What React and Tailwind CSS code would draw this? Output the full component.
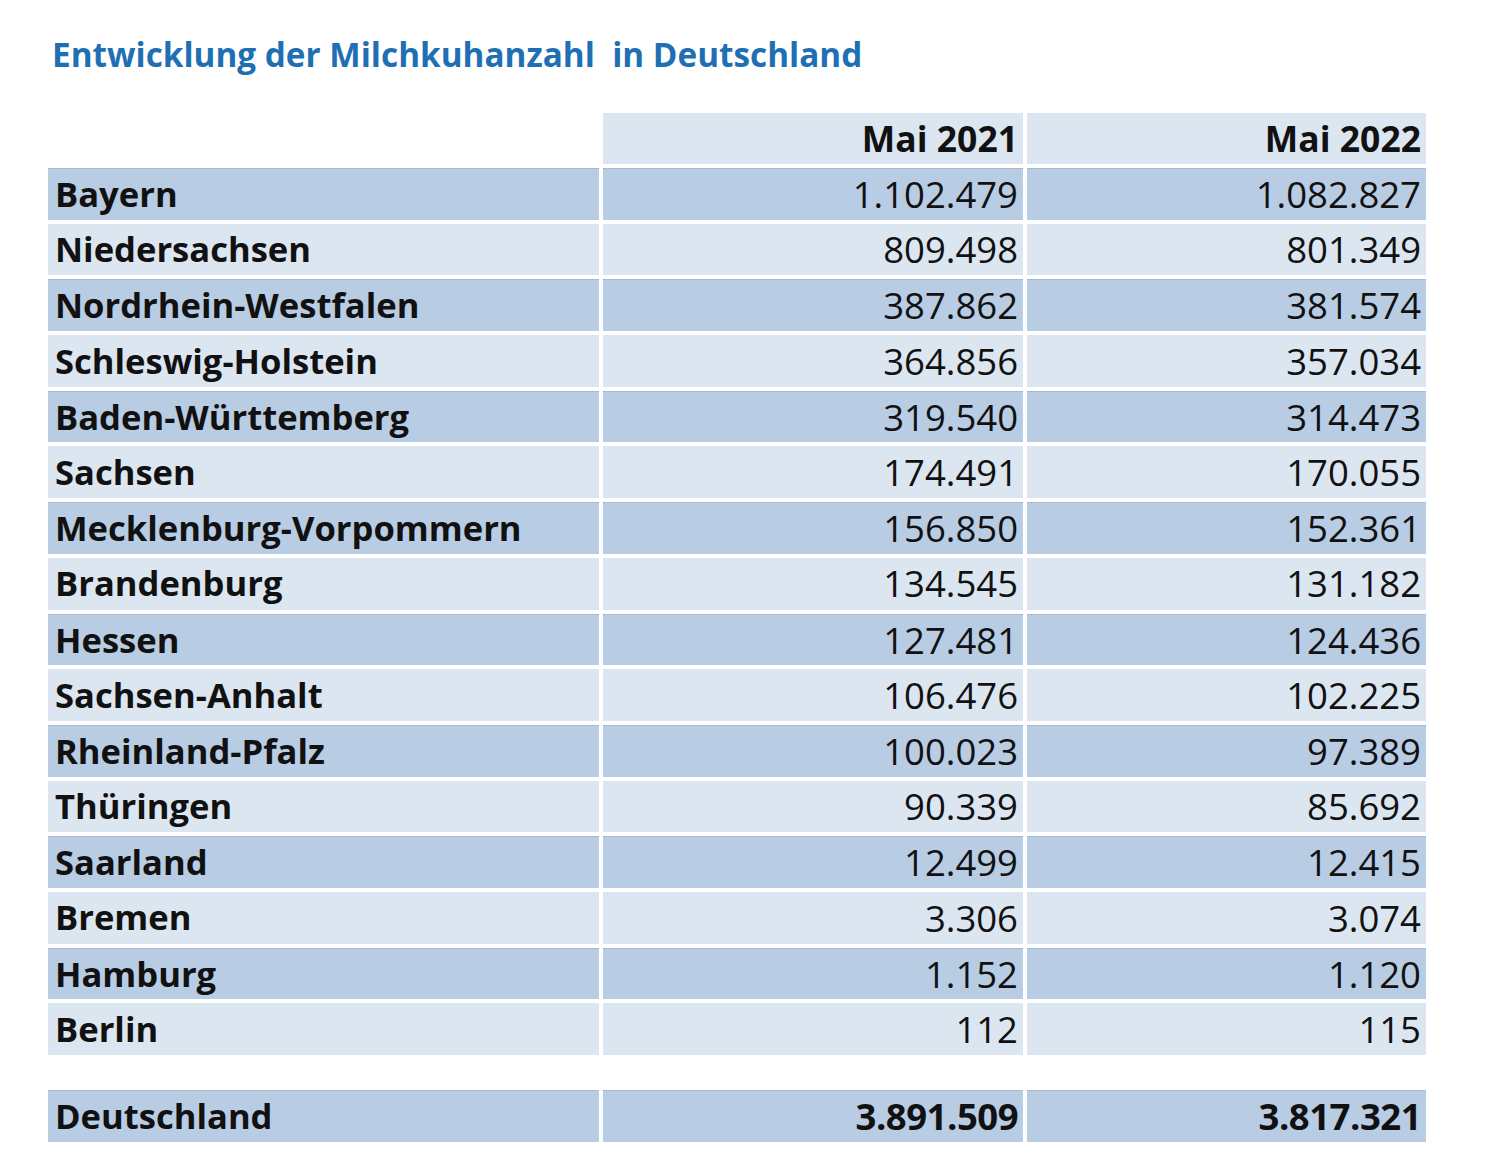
import React from 'react';

const ROWS = [
    ['Bayern', '1.102.479', '1.082.827'],
    ['Niedersachsen', '809.498', '801.349'],
    ['Nordrhein-Westfalen', '387.862', '381.574'],
    ['Schleswig-Holstein', '364.856', '357.034'],
    ['Baden-Württemberg', '319.540', '314.473'],
    ['Sachsen', '174.491', '170.055'],
    ['Mecklenburg-Vorpommern', '156.850', '152.361'],
    ['Brandenburg', '134.545', '131.182'],
    ['Hessen', '127.481', '124.436'],
    ['Sachsen-Anhalt', '106.476', '102.225'],
    ['Rheinland-Pfalz', '100.023', '97.389'],
    ['Thüringen', '90.339', '85.692'],
    ['Saarland', '12.499', '12.415'],
    ['Bremen', '3.306', '3.074'],
    ['Hamburg', '1.152', '1.120'],
    ['Berlin', '112', '115'],
];

const GRID = "grid grid-cols-[551px_420px_399px] gap-x-[4px]";

function Row({ cells, dark, bold }) {
    const bg = dark ? "bg-[#b8cce4] border-t border-dotted border-[#98a8bc]" : "bg-[#dce6f1]";
    return (
        <div className={`${GRID} h-[51.7px]`}>
            <div className={`${bg} flex items-center pl-[7px] font-bold text-[34.6px]`}>{cells[0]}</div>
            <div className={`${bg} flex items-center justify-end pr-[5px] text-[36.5px] ${bold ? 'font-bold tracking-[-0.5px]' : ''}`}>{cells[1]}</div>
            <div className={`${bg} flex items-center justify-end pr-[5px] text-[36.5px] ${bold ? 'font-bold tracking-[-0.5px]' : ''}`}>{cells[2]}</div>
        </div>
    );
}

export default function App() {
    return (
        <div className="w-[1500px] h-[1162px] bg-white pl-[48px] pt-[30px] text-[#111] leading-none" style={{ fontFamily: '"Open Sans", sans-serif' }}>
            <h1 className="pl-[4px] h-[50px] text-[#1f6fb4] font-bold text-[33.3px] flex items-center">
                Entwicklung der Milchkuhanzahl&nbsp; in Deutschland
            </h1>
            <div className="mt-[33px] flex flex-col gap-[4px]">
                <div className={`${GRID} h-[51px]`}>
                    <div className="bg-white"></div>
                    <div className="bg-[#dce6f1] flex items-center justify-end pr-[5px] font-bold text-[35.5px]">Mai 2021</div>
                    <div className="bg-[#dce6f1] flex items-center justify-end pr-[5px] font-bold text-[35.5px]">Mai 2022</div>
                </div>
                {ROWS.map((r, i) => (
                    <Row key={r[0]} cells={r} dark={i % 2 === 0} />
                ))}
                <div className="h-[27px]"></div>
                <Row cells={['Deutschland', '3.891.509', '3.817.321']} dark bold />
            </div>
        </div>
    );
}
